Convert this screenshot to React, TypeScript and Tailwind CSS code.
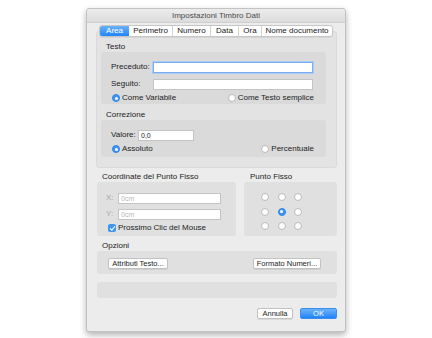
const font = { fontFamily: '"Liberation Sans", Arial, sans-serif' };

function Radio({ on = false }: { on?: boolean }) {
  return on ? (
    <span className="flex h-[8px] w-[8px] shrink-0 items-center justify-center rounded-full bg-[#3d95f7] border border-[#2f86ea]">
      <span className="h-[3px] w-[3px] rounded-full bg-white" />
    </span>
  ) : (
    <span className="h-[8px] w-[8px] shrink-0 rounded-full bg-white border border-[#b9b9b9]" />
  );
}

function Field({ w, text, focus, dim }: { w: string; text?: string; focus?: boolean; dim?: boolean }) {
  return (
    <div
      className={`${w} h-[11px] bg-white flex items-center px-[2px] text-[7px] leading-none ${
        focus ? 'border border-[#7aaef0] shadow-[0_0_0_1px_#a9cbf5]' : 'border border-[#c4c4c4]'
      } ${dim ? 'text-[#b8b8b8]' : 'text-[#222]'}`}
    >
      {text}
    </div>
  );
}

function Btn({ w, label, primary }: { w: string; label: string; primary?: boolean }) {
  return (
    <div
      className={`${w} h-[11px] rounded-[2px] flex items-center justify-center text-[7.5px] leading-none ${
        primary
          ? 'bg-gradient-to-b from-[#6cb3fa] to-[#1a82fb] text-white border border-[#3a8ef0]'
          : 'bg-white text-[#222] border border-[#c2c2c2] shadow-[0_1px_0_rgba(0,0,0,0.08)]'
      }`}
    >
      {label}
    </div>
  );
}

const tabs = [
  { label: 'Area', w: 'w-[29px]' },
  { label: 'Perimetro', w: 'w-[43px]' },
  { label: 'Numero', w: 'w-[38px]' },
  { label: 'Data', w: 'w-[28px]' },
  { label: 'Ora', w: 'w-[23px]' },
  { label: 'Nome documento', w: 'w-[71px]' },
];

export default function App() {
  return (
    <div className="w-[432px] h-[338px] bg-white pt-[8px] pl-[86px] text-[8px] text-[#222]" style={font}>
      <div className="w-[260px] h-[324px] bg-[#ececec] border border-[#c3c3c3] rounded-[3px] shadow-[0_3px_6px_rgba(0,0,0,0.3)] flex flex-col">
        {/* Title bar */}
        <div className="h-[14px] shrink-0 bg-gradient-to-b from-[#ececec] to-[#dcdcdc] border-b border-[#cfcfcf] rounded-t-[3px] flex items-center justify-center text-[8px] text-[#4a4a4a]">
          Impostazioni Timbro Dati
        </div>

        {/* Tabs */}
        <div className="mt-[2px] h-[12px] flex justify-center relative z-10">
          <div className="flex bg-white border border-[#c6c6c6] rounded-[3px] overflow-hidden shadow-[0_1px_0_rgba(0,0,0,0.06)]">
            {tabs.map((t, i) => (
              <div
                key={t.label}
                className={`${t.w} flex items-center justify-center leading-none text-[8px] ${
                  i === 0
                    ? 'bg-gradient-to-b from-[#69b1fa] to-[#1c84fb] text-white'
                    : 'text-[#222] border-l border-[#d2d2d2]'
                } ${i === 1 ? 'border-l-0' : ''}`}
              >
                {t.label}
              </div>
            ))}
          </div>
        </div>

        {/* Tab panel */}
        <div className="ml-[9px] -mt-[6px] w-[241px] h-[137px] shrink-0 bg-[#e3e3e3] border border-[#dadada] rounded-[3px] pt-[10px] pl-[4px]">
          <div className="h-[10px] pl-[5px] leading-[10px]">Testo</div>
          <div className="w-[225px] h-[52px] bg-[#dadada] rounded-[3px] pt-[9px] pl-[10px] pr-[12px]">
            <div className="flex items-center">
              <span className="w-[42px]">Preceduto:</span>
              <Field w="w-[160px]" focus />
            </div>
            <div className="flex items-center mt-[5px]">
              <span className="w-[42px]">Seguito:</span>
              <Field w="w-[160px]" />
            </div>
            <div className="flex items-center justify-between mt-[3px] pl-[1px] h-[10px]">
              <span className="flex items-center gap-[2px]">
                <Radio on />
                Come Variabile
              </span>
              <span className="flex items-center gap-[2px]">
                <Radio />
                Come Testo semplice
              </span>
            </div>
          </div>

          <div className="h-[10px] pl-[5px] mt-[6px] leading-[10px]">Correzione</div>
          <div className="w-[225px] h-[37px] bg-[#dadada] rounded-[3px] pt-[9px] pl-[10px] pr-[12px]">
            <div className="flex items-center">
              <span className="w-[27px]">Valore:</span>
              <Field w="w-[56px]" text="0,0" />
            </div>
            <div className="flex items-center justify-between mt-[3px] pl-[1px] h-[10px]">
              <span className="flex items-center gap-[2px]">
                <Radio on />
                Assoluto
              </span>
              <span className="flex items-center gap-[2px]">
                <Radio />
                Percentuale
              </span>
            </div>
          </div>
        </div>

        {/* Lower groups */}
        <div className="ml-[10px] w-[240px] mt-[4px]">
          <div className="flex gap-[8px]">
            <div className="w-[139px]">
              <div className="h-[10px] pl-[5px] leading-[10px]">Coordinate del Punto Fisso</div>
              <div className="h-[54px] bg-[#e0e0e0] rounded-[3px] pt-[10px] pl-[9px]">
                <div className="flex items-center">
                  <span className="w-[12px] text-[#a8a8a8]">X:</span>
                  <Field w="w-[103px]" text="0cm" dim />
                </div>
                <div className="flex items-center mt-[4px]">
                  <span className="w-[12px] text-[#a8a8a8]">Y:</span>
                  <Field w="w-[103px]" text="0cm" dim />
                </div>
                <div className="flex items-center gap-[2px] mt-[3px] h-[10px] pl-[2px]">
                  <span className="flex h-[8px] w-[8px] items-center justify-center rounded-[2px] bg-[#3d95f7]">
                    <svg viewBox="0 0 8 8" className="h-[7px] w-[7px]">
                      <path d="M1.5 4.2 L3.2 6 L6.5 1.8" fill="none" stroke="white" strokeWidth="1.2" strokeLinecap="round" strokeLinejoin="round" />
                    </svg>
                  </span>
                  Prossimo Clic del Mouse
                </div>
              </div>
            </div>
            <div className="w-[93px]">
              <div className="h-[10px] pl-[6px] leading-[10px]">Punto Fisso</div>
              <div className="h-[54px] bg-[#e0e0e0] rounded-[3px] pt-[11px] pl-[17px]">
                <div className="grid grid-cols-[8px_8px_8px] gap-x-[8.5px] gap-y-[6.5px] w-fit">
                  {[0, 1, 2, 3, 4, 5, 6, 7, 8].map((i) => (
                    <Radio key={i} on={i === 4} />
                  ))}
                </div>
              </div>
            </div>
          </div>

          <div className="h-[10px] pl-[5px] mt-[5px] leading-[10px]">Opzioni</div>
          <div className="h-[23px] bg-[#e0e0e0] rounded-[3px] flex items-center justify-between pl-[11px] pr-[16px] pt-[2px]">
            <Btn w="w-[60px]" label="Attributi Testo..." />
            <Btn w="w-[68px]" label="Formato Numeri..." />
          </div>

          <div className="h-[16px] bg-[#e0e0e0] rounded-[3px] mt-[8px]" />

          <div className="flex justify-end gap-[7px] mt-[10px]">
            <Btn w="w-[36px]" label="Annulla" />
            <Btn w="w-[37px]" label="OK" primary />
          </div>
        </div>
      </div>
    </div>
  );
}
